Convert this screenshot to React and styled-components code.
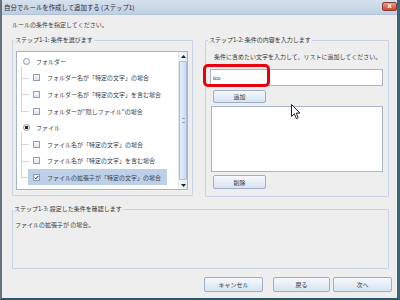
import React from "react";
import styled, { createGlobalStyle } from "styled-components";

const GlobalStyle = createGlobalStyle`
  html, body {
    margin: 0;
    padding: 0;
    background: #ffffff;
  }
  body {
    font-family: "Noto Sans CJK JP", "Noto Sans", sans-serif;
  }
`;

const Window = styled.div`
  position: relative;
  box-sizing: border-box;
  width: 400px;
  height: 300px;
  display: flex;
  flex-direction: column;
  background: #eeeeee;
  border-left: 2px solid #66727f;
  border-right: 3px solid #3a6676;
  border-bottom: 2px solid #2d5565;
  overflow: hidden;
  font-size: 6px;
  color: #3a3a3a;
`;

const TitleBar = styled.div`
  flex: none;
  height: 15px;
  box-sizing: border-box;
  display: flex;
  align-items: center;
  justify-content: space-between;
  padding: 0 0 0 2px;
  background: linear-gradient(#d6e1ee, #bfcfe2);
  border-bottom: 1px solid #b3c4d6;
`;

const Title = styled.span`
  font-size: 6.4px;
  color: #1d2836;
`;

const CloseButton = styled.div`
  width: 15px;
  height: 9px;
  box-sizing: border-box;
  margin-top: -2px;
  border: 1px solid #8e3a2c;
  border-radius: 2px;
  background: linear-gradient(#eb9a88, #c9472f);
  color: #fff;
  font-size: 7px;
  line-height: 7px;
  text-align: center;
  font-family: "DejaVu Sans", sans-serif;
  font-weight: bold;
`;

const Content = styled.div`
  flex: 1;
  display: flex;
  flex-direction: column;
  padding: 5px 8px 0 10px;
`;

const Instruction = styled.div`
  line-height: 10px;
`;

const Columns = styled.div`
  display: flex;
  gap: 12px;
  margin-top: 5px;
  align-items: flex-start;
`;

const Group = styled.fieldset`
  margin: 0;
  min-width: 0;
  box-sizing: border-box;
  border: 1px solid #c9d2e6;
  border-radius: 1px;
  padding: ${(p) => p.$pad};
  width: ${(p) => p.$w};
  height: ${(p) => p.$h}px;
  margin-top: ${(p) => p.$top || 0}px;
`;

const Legend = styled.legend`
  padding: 0 1px;
  margin-left: -2px;
  line-height: 10px;
  color: #333;
`;

const ListBox = styled.div`
  box-sizing: border-box;
  width: 100%;
  height: 139px;
  display: flex;
  background: #ffffff;
  border: 1px solid #a9b5c6;
`;

const Items = styled.div`
  flex: 1;
  padding-top: 1px;
`;

const Item = styled.div`
  position: relative;
  height: 16.6px;
  display: flex;
  align-items: center;
  padding-left: ${(p) => (p.$child ? 11 : 6)}px;

  ${(p) =>
    p.$child &&
    `
    &::before {
      content: "";
      position: absolute;
      left: 4px;
      top: -4px;
      height: ${p.$last ? "12.3px" : "20.6px"};
      border-left: 1px solid #d4d4d4;
    }
    &::after {
      content: "";
      position: absolute;
      left: 4px;
      top: 8.3px;
      width: 8px;
      border-top: 1px solid #d4d4d4;
    }
  `}
`;

const Label = styled.div`
  display: flex;
  align-items: center;
  gap: 7px;
  height: 16px;
  padding: 0 6px 0 5px;
  background: ${(p) => (p.$selected ? "#bcd1e9" : "transparent")};
`;

const Radio = styled.span`
  box-sizing: border-box;
  width: 7px;
  height: 7px;
  border-radius: 50%;
  border: 1px solid #8d9cb2;
  background: ${(p) =>
    p.$on
      ? "radial-gradient(circle, #2b2b2b 0 1.6px, #f2f4f7 2px)"
      : "linear-gradient(#ffffff, #e3e8ef)"};
  margin-right: 6px;
`;

const Check = styled.span`
  box-sizing: border-box;
  width: 7px;
  height: 7px;
  border: 1px solid #8f9fb6;
  background: linear-gradient(#f7f9fc, #dde5ef);
  display: flex;
  align-items: center;
  justify-content: center;
`;

const ScrollBar = styled.div`
  width: 8px;
  display: flex;
  flex-direction: column;
  background: #f1f3f6;
  border-left: 1px solid #e2e6ec;
`;

const Arrow = styled.div`
  height: 8px;
  display: flex;
  align-items: center;
  justify-content: center;
  background: linear-gradient(to right, #f6f8fb, #e2e8f0);
`;

const Track = styled.div`
  flex: 1;
  display: flex;
  padding: 1px 0;
`;

const Thumb = styled.div`
  flex: 1;
  box-sizing: border-box;
  border: 1px solid #a9bedb;
  border-radius: 1px;
  background: linear-gradient(to right, #e6eefa, #cbdbf0);
  display: flex;
  align-items: center;
  justify-content: center;
`;

const Grip = styled.div`
  width: 3px;
  height: 3px;
  border-top: 1px solid #8ea6c8;
  border-bottom: 1px solid #8ea6c8;
`;

const Hint = styled.div`
  margin-left: 4px;
  line-height: 8px;
`;

const InputWrap = styled.div`
  position: relative;
  margin-top: 8px;
  height: 17px;
`;

const TextInput = styled.div`
  box-sizing: border-box;
  height: 100%;
  background: #ffffff;
  border: 1px solid #a9b5c6;
  padding-left: 2px;
  display: flex;
  align-items: center;
  font-family: "Liberation Sans", sans-serif;
  font-size: 6px;
  color: #333;
`;

const Highlight = styled.div`
  position: absolute;
  left: -7px;
  top: -5px;
  width: 67px;
  height: 23px;
  box-sizing: border-box;
  border: 3.5px solid #e8000c;
  border-radius: 5px;
`;

const Button = styled.div`
  box-sizing: border-box;
  width: ${(p) => p.$w}px;
  height: ${(p) => p.$h}px;
  margin: ${(p) => p.$m || 0};
  border: 1px solid #9cafc7;
  border-radius: 2px;
  background: linear-gradient(#f6f9fd, #d6e3f1);
  display: flex;
  align-items: center;
  justify-content: center;
  color: #333;
`;

const EntryList = styled.div`
  box-sizing: border-box;
  margin: 3px 0 0 1px;
  height: 66px;
  background: #ffffff;
  border: 1px solid #a9b5c6;
`;

const Summary = styled.div`
  line-height: 8px;
`;

const ButtonRow = styled.div`
  display: flex;
  justify-content: flex-end;
  margin: 8px -3px 0 0;
`;

const Cursor = styled.svg`
  position: absolute;
  left: 289px;
  top: 104px;
`;

const tree = [
  { type: "radio", text: "フォルダー" },
  { text: "フォルダー名が「特定の文字」の場合" },
  { text: "フォルダー名が「特定の文字」を含む場合" },
  { text: "フォルダーが“隠しファイル”の場合", last: true },
  { type: "radio", text: "ファイル", on: true },
  { text: "ファイル名が「特定の文字」の場合" },
  { text: "ファイル名が「特定の文字」を含む場合" },
  { text: "ファイルの拡張子が「特定の文字」の場合", checked: true, last: true },
];

const CheckMark = () => (
  <svg width="5" height="5" viewBox="0 0 5 5">
    <path d="M0.6 2.6 L1.9 3.8 L4.4 0.9" fill="none" stroke="#1f2a36" strokeWidth="1" />
  </svg>
);

const App = () => (
  <Window>
    <GlobalStyle />
    <TitleBar>
      <Title>自分でルールを作成して追加する (ステップ1)</Title>
      <CloseButton>x</CloseButton>
    </TitleBar>
    <Content>
      <Instruction>ルールの条件を指定してください。</Instruction>
      <Columns>
        <Group $w="182px" $h={161} $pad="6px 4px 5px 3px">
          <Legend>ステップ1-1: 条件を選びます</Legend>
          <ListBox>
            <Items>
              {tree.map((it) =>
                it.type === "radio" ? (
                  <Item key={it.text}>
                    <Radio $on={it.on} />
                    {it.text}
                  </Item>
                ) : (
                  <Item key={it.text} $child $last={it.last}>
                    <Label $selected={it.checked}>
                      <Check>{it.checked && <CheckMark />}</Check>
                      {it.text}
                    </Label>
                  </Item>
                )
              )}
            </Items>
            <ScrollBar>
              <Arrow>
                <svg width="5" height="3" viewBox="0 0 5 3">
                  <path d="M0 3 L2.5 0 L5 3 Z" fill="#222" />
                </svg>
              </Arrow>
              <Track>
                <Thumb>
                  <Grip />
                </Thumb>
              </Track>
              <Arrow>
                <svg width="5" height="3" viewBox="0 0 5 3">
                  <path d="M0 0 L2.5 3 L5 0 Z" fill="#222" />
                </svg>
              </Arrow>
            </ScrollBar>
          </ListBox>
        </Group>
        <Group $w="185px" $h={162} $pad="8px 5px 7px 4px">
          <Legend>ステップ1-2: 条件の内容を入力します</Legend>
          <Hint>条件に含めたい文字を入力して、リストに追加してください。</Hint>
          <InputWrap>
            <TextInput>ico</TextInput>
            <Highlight />
          </InputWrap>
          <Button $w={53} $h={13} $m="4px 0 0 3px">追加</Button>
          <EntryList />
          <Button $w={53} $h={14} $m="3px 0 0 3px">削除</Button>
        </Group>
      </Columns>
      <Group $w="100%" $h={65} $pad="7px 2px 0 2px" $top={7}>
        <Legend>ステップ1-3: 設定した条件を確認します</Legend>
        <Summary>ファイルの拡張子が  の場合。</Summary>
      </Group>
      <ButtonRow>
        <Button $w={59} $h={15} $m="0 10px 0 0">キャンセル</Button>
        <Button $w={57} $h={15} $m="0 3px 0 0">戻る</Button>
        <Button $w={59} $h={15}>次へ</Button>
      </ButtonRow>
    </Content>
    <Cursor width="10" height="16" viewBox="0 0 10 16">
      <path
        d="M0.5 0.5 L0.5 12.5 L3.3 9.8 L5.3 14.6 L7.2 13.8 L5.2 9.1 L9 9.1 Z"
        fill="#ffffff"
        stroke="#222"
        strokeWidth="1"
        strokeLinejoin="round"
      />
    </Cursor>
  </Window>
);

export default App;
